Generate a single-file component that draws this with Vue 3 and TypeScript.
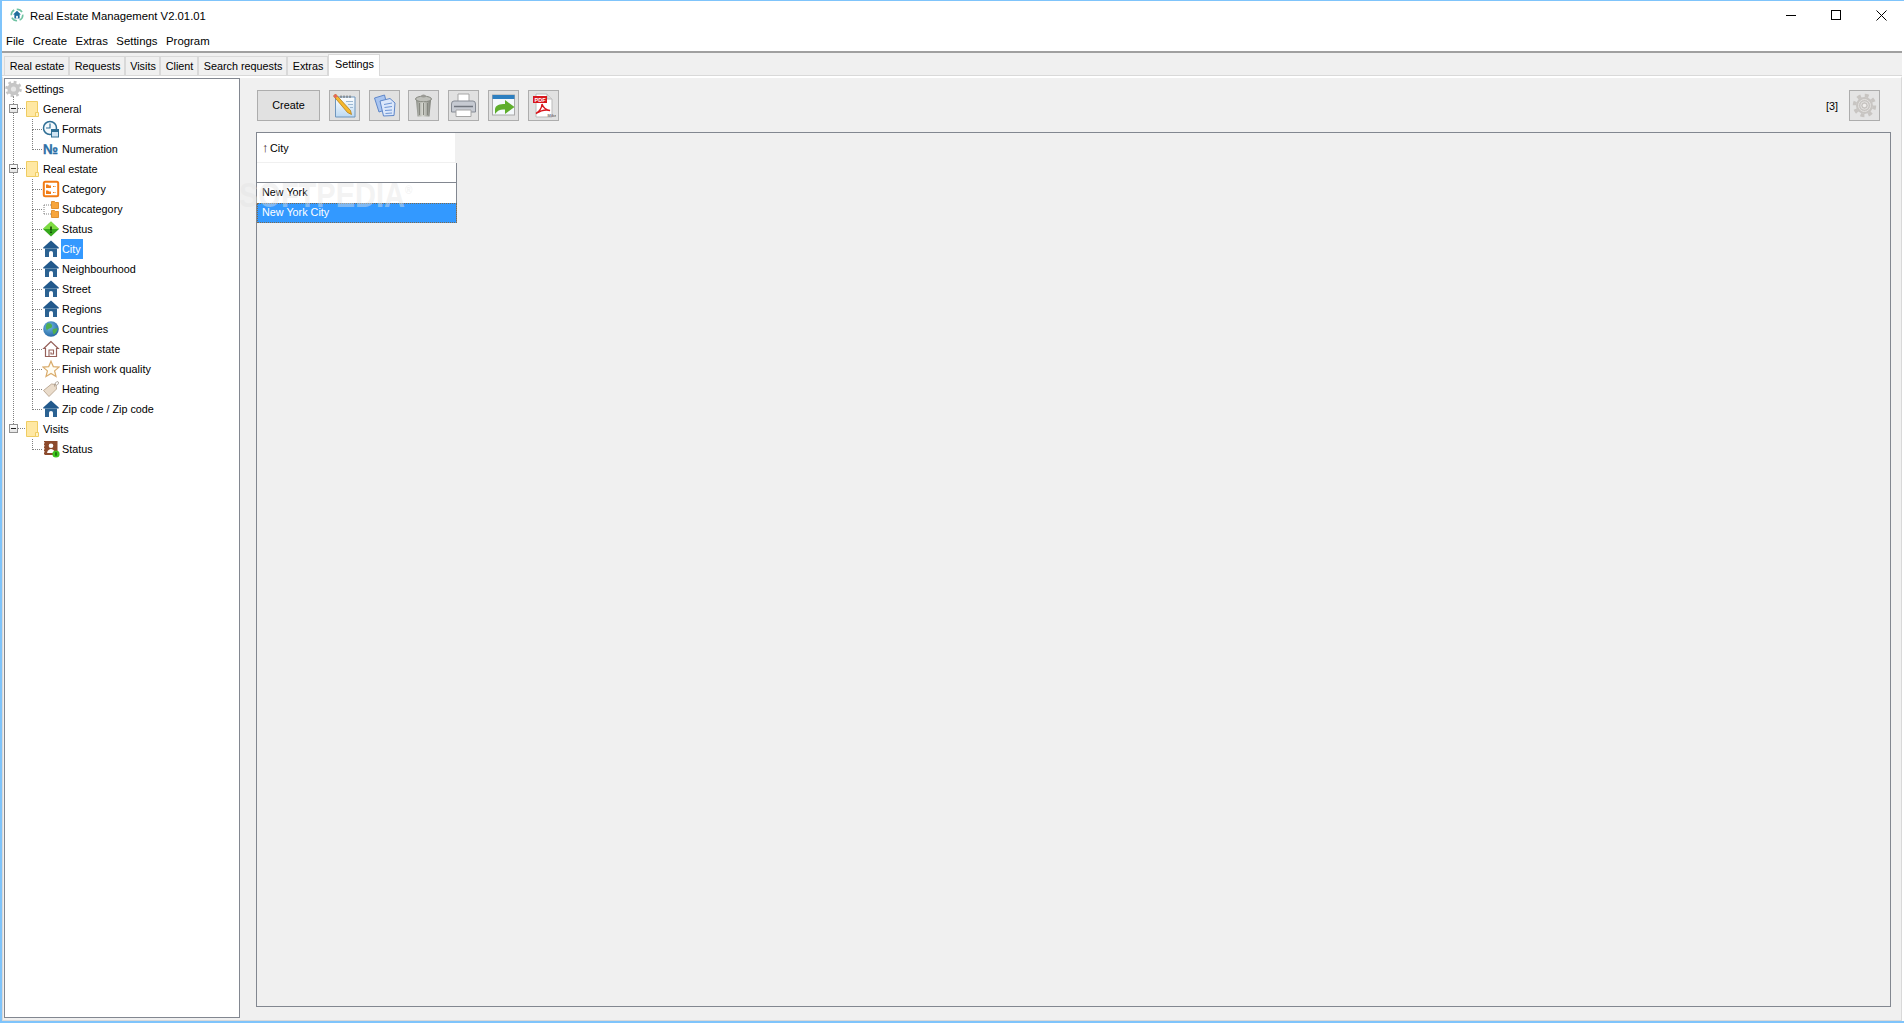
<script setup lang="ts">
type Row = { label: string; level: number; icon: string; selected?: boolean; last?: boolean };
const tabs = [
  { label: 'Real estate', width: 65 },
  { label: 'Requests', width: 56 },
  { label: 'Visits', width: 35 },
  { label: 'Client', width: 38 },
  { label: 'Search requests', width: 89 },
  { label: 'Extras', width: 41 },
];
const menus = ['File', 'Create', 'Extras', 'Settings', 'Program'];
const rows: Row[] = [
  { label: 'Settings', level: 0, icon: 'gear' },
  { label: 'General', level: 1, icon: 'folder' },
  { label: 'Formats', level: 2, icon: 'clock' },
  { label: 'Numeration', level: 2, icon: 'num', last: true },
  { label: 'Real estate', level: 1, icon: 'folder' },
  { label: 'Category', level: 2, icon: 'cat' },
  { label: 'Subcategory', level: 2, icon: 'subcat' },
  { label: 'Status', level: 2, icon: 'diamond' },
  { label: 'City', level: 2, icon: 'house', selected: true },
  { label: 'Neighbourhood', level: 2, icon: 'house' },
  { label: 'Street', level: 2, icon: 'house' },
  { label: 'Regions', level: 2, icon: 'house' },
  { label: 'Countries', level: 2, icon: 'globe' },
  { label: 'Repair state', level: 2, icon: 'repair' },
  { label: 'Finish work quality', level: 2, icon: 'star' },
  { label: 'Heating', level: 2, icon: 'tag' },
  { label: 'Zip code / Zip code', level: 2, icon: 'house', last: true },
  { label: 'Visits', level: 1, icon: 'folder' },
  { label: 'Status', level: 2, icon: 'person', last: true },
];
</script>

<template>
  <div class="window">
    <header class="titlebar">
      <svg class="app-icon" width="14" height="14" viewBox="0 0 16 16">
        <circle cx="8" cy="8" r="6.6" fill="none" stroke="#6fc3a2" stroke-width="1.8" stroke-dasharray="7 3" />
        <path d="M8 3 12.500 7.500H11V12H5V7.500H3.500Z" fill="#1f6d9c" />
        <rect x="7" y="9" width="2" height="3" fill="#fff" />
      </svg>
      <span class="title">Real Estate Management V2.01.01</span>
      <div class="win-controls">
        <svg width="11" height="11" viewBox="0 0 11 11"><path d="M0 5.500H10" stroke="#000" /></svg>
        <svg width="11" height="11" viewBox="0 0 11 11"><rect x=".5" y=".5" width="9" height="9" fill="none" stroke="#000" /></svg>
        <svg width="11" height="11" viewBox="0 0 11 11"><path d="M.5 .5 10.500 10.500M10.500 .5 .5 10.500" stroke="#000" /></svg>
      </div>
    </header>
    <nav class="menubar">
      <span v-for="m in menus" :key="m">{{ m }}</span>
    </nav>
    <div class="tabbar">
      <div v-for="t in tabs" :key="t.label" class="tab" :style="{ width: t.width + 'px' }">{{ t.label }}</div>
      <div class="tab active">Settings</div>
    </div>
    <main class="pane">
      <aside class="tree">
        <span class="trunk"></span>
        <div v-for="(r, i) in rows" :key="i" class="row" :class="'lvl' + r.level">
          <span v-if="r.level === 1" class="expander"></span>
          <span v-if="r.level === 2" class="branch" :class="{ end: r.last }"></span>
          <span class="node-icon">
            <svg width="18" height="18" viewBox="0 0 18 18">
              <template v-if="r.icon === 'gear'">
                <circle cx="8.500" cy="9" r="6.200" fill="#c6c6c6" />
                <circle cx="8.500" cy="9" r="6.800" fill="none" stroke="#c6c6c6" stroke-width="3" stroke-dasharray="2.700 2.640" />
                <circle cx="8.500" cy="9" r="2.600" fill="#e6e6e6" />
              </template>
              <template v-else-if="r.icon === 'folder'">
                <path d="M2.500 1.500H13.500V16.500H2.500Z" fill="#ffe8a3" stroke="#f0cd63" />
                <path d="M11.500 12.500H14.500V16.500H11.500Z" fill="#fff3c4" stroke="#f0cd63" />
              </template>
              <template v-else-if="r.icon === 'clock'">
                <circle cx="8" cy="8" r="6.500" fill="#f4f9fc" stroke="#2f6f95" stroke-width="1.500" />
                <path d="M8 3.500V8H4" fill="none" stroke="#2f6f95" stroke-width="1.200" />
                <rect x="9.500" y="9.500" width="7" height="7.500" fill="#cfe3f2" stroke="#2f6f95" />
                <rect x="9.500" y="9.500" width="7" height="2.500" fill="#2f6f95" />
              </template>
              <template v-else-if="r.icon === 'num'">
                <text x="1" y="14" class="num-glyph" textLength="15" lengthAdjust="spacingAndGlyphs">№</text>
              </template>
              <template v-else-if="r.icon === 'cat'">
                <rect x="1.800" y="1.800" width="14.400" height="14.400" rx="1.500" fill="#fff" stroke="#f17c16" stroke-width="2" />
                <path d="M4 4.500H6L7 5.500H9V8H4ZM4 10.500H6L7 11.500H9V14H4Z" fill="#f17c16" />
                <path d="M11 6.500H14M11 12.500H14" stroke="#f17c16" stroke-dasharray="1.500 1" />
              </template>
              <template v-else-if="r.icon === 'subcat'">
                <path d="M2 5V14M2 5H9M2 14H9" fill="none" stroke="#808080" stroke-dasharray="1 1" />
                <path d="M9.500 1.500H12.500L13.500 2.500H16.500V8.500H9.500Z" fill="#f7a63d" stroke="#d88216" stroke-width=".8" />
                <path d="M9.500 10.500H12.500L13.500 11.500H16.500V17.500H9.500Z" fill="#f7a63d" stroke="#d88216" stroke-width=".8" />
              </template>
              <template v-else-if="r.icon === 'diamond'">
                <path d="M9 1.500 17 9 9 16.500 1 9Z" fill="#36a81c" />
                <path d="M9 1.500 17 9H1Z" fill="#7fdc42" />
                <path d="M9 6.500V10.500M9 11.500V13" stroke="#123d08" stroke-width="1.600" />
              </template>
              <template v-else-if="r.icon === 'house'">
                <path d="M9 .5 16.800 7.500V8.500H1.200V7.500Z" fill="#22598c" />
                <path d="M3 8.500H15V17H3Z" fill="#2b6292" />
                <path d="M7 17V12.500Q7 11 9 11T11 12.500V17Z" fill="#fff" />
              </template>
              <template v-else-if="r.icon === 'globe'">
                <defs>
                  <radialGradient id="globe-sea" cx=".4" cy=".35" r=".75">
                    <stop offset="0" stop-color="#6fb7e6" />
                    <stop offset="1" stop-color="#1f5f9c" />
                  </radialGradient>
                </defs>
                <circle cx="9" cy="9" r="7.800" fill="url(#globe-sea)" />
                <path d="M5 3.500C8 2.500 11 4.500 10 7 9 9 6 8 5 10.500 3.500 8 3.500 6 5 3.500ZM11 9 15.500 8C15.500 11 13.500 14 11.500 14.500 11 12 10 11 11 9Z" fill="#4fae4f" />
              </template>
              <template v-else-if="r.icon === 'repair'">
                <path d="M9 1.500 1.800 8.500H3.500V16.500H14.500V8.500H16.200Z" fill="#fff" stroke="#96615a" stroke-width="1.200" />
                <path d="M7 16.500V10H11.500V14H9V12.300" fill="none" stroke="#96615a" stroke-width="1.100" />
              </template>
              <template v-else-if="r.icon === 'star'">
                <path d="M9 1.200 11.300 6.600 17 7.100 12.600 10.900 14 16.500 9 13.500 4 16.500 5.400 10.900 1 7.100 6.700 6.600Z" fill="#fffdf4" stroke="#d9ab6b" stroke-width="1.200" />
              </template>
              <template v-else-if="r.icon === 'tag'">
                <path d="M1.500 10.500 9.500 4 14 4.500 14.500 9 7 16.500Z" fill="#eadccb" stroke="#b8a48e" stroke-width=".9" />
                <path d="M12.500 6.500C12.500 3 15 .5 16.300 2 17 3.500 15.500 5 14.300 5.500" fill="none" stroke="#9b8f84" stroke-width=".8" />
              </template>
              <template v-else>
                <rect x="2" y="1" width="13.500" height="14" fill="#8c4a2c" />
                <path d="M2 2V15" stroke="#fff" stroke-dasharray="1.500 1.500" />
                <circle cx="9" cy="5.800" r="2.300" fill="#fff" />
                <path d="M5 13C5.500 10 7.500 9 9 9S12.500 10 13 13Z" fill="#fff" />
                <circle cx="14" cy="14" r="3.600" fill="#3dc41e" />
                <path d="M14 12.300V15.700" stroke="#0c4d06" stroke-width="1.200" />
              </template>
            </svg>
          </span>
          <span class="label" :class="{ selected: r.selected }">{{ r.label }}</span>
        </div>
      </aside>
      <section class="content">
        <div class="toolbar">
          <button class="btn create">Create</button>
          <div class="tools">
            <button class="btn icon">
              <svg width="25" height="25" viewBox="0 0 25 25">
                <defs>
                  <linearGradient id="pad" x1="0" x2="0" y1="0" y2="1">
                    <stop offset="0" stop-color="#fff" />
                    <stop offset="1" stop-color="#bcd9f2" />
                  </linearGradient>
                </defs>
                <path d="M3.500 4H23V24H3.500Z" fill="url(#pad)" stroke="#6f96bd" />
                <path d="M9 2.500V5M12 2.500V5M15 2.500V5M18 2.500V5" stroke="#666" />
                <path d="M14 8.500H21M16 11.500H21M18 14.500H21" stroke="#9cb8d2" />
                <path d="M1.500 3 3.500 1 18.500 17.500 19.500 21.500 15.500 19.500Z" fill="#f7b92e" stroke="#a8730e" stroke-width=".7" />
                <path d="M1.500 3 3.500 1 5.500 3.200 3.500 5.200Z" fill="#e8615f" />
              </svg>
            </button>
            <button class="btn icon">
              <svg width="25" height="25" viewBox="0 0 25 25">
                <path d="M2.500 5 12.500 2 16 16 7 19Z" fill="#a8c4f0" stroke="#5f87c9" />
                <path d="M8 8 18 5.500 23 10 22 22.500 11.500 23Z" fill="#dbe7fb" stroke="#5f87c9" />
                <path d="M12 11.500 20 10M12.500 14.500 20 13.500M13 17.500 20 17M13.500 20.500 20 20" stroke="#6f96d4" />
              </svg>
            </button>
            <button class="btn icon">
              <svg width="25" height="25" viewBox="0 0 25 25">
                <defs>
                  <linearGradient id="bin" x1="0" x2="1" y1="0" y2="0">
                    <stop offset="0" stop-color="#8b8e87" />
                    <stop offset=".45" stop-color="#d8d9d2" />
                    <stop offset="1" stop-color="#7b7d76" />
                  </linearGradient>
                </defs>
                <path d="M5 7H20L18.500 23.500H6.500Z" fill="url(#bin)" />
                <path d="M8.500 10V22M12.500 10V22M16.500 10V22" stroke="#85877f" />
                <ellipse cx="12.500" cy="6" rx="8" ry="2.800" fill="#bfc0ba" stroke="#85877f" />
                <ellipse cx="12.500" cy="3" rx="2.500" ry="1.500" fill="#9a9a95" />
              </svg>
            </button>
            <button class="btn icon">
              <svg width="27" height="25" viewBox="0 0 27 25">
                <path d="M8 1H19V10H8Z" fill="#fff" stroke="#a5a5a5" />
                <path d="M1.500 11Q1.500 8 4 8H23Q25.500 8 25.500 11V19H1.500Z" fill="#c6cad2" stroke="#868b94" />
                <path d="M4 13.500H23" stroke="#70757e" stroke-width="1.500" />
                <path d="M6 17H21V23.500H6Z" fill="#fff" stroke="#a5a5a5" />
              </svg>
            </button>
            <button class="btn icon">
              <svg width="25" height="25" viewBox="0 0 25 25">
                <rect x="1.500" y="2" width="22" height="20" fill="#f4f8fb" stroke="#aaa" />
                <rect x="1.500" y="2" width="22" height="4" fill="#2d7fc0" />
                <path d="M4 21V16C4.500 12 9 11 14 11V7L23.500 14 14 21V16.500C10 16 6.500 17 4 21Z" fill="#5fae2c" />
              </svg>
            </button>
            <button class="btn icon">
              <svg width="25" height="25" viewBox="0 0 25 25">
                <path d="M5 1H16L21 6V24H5Z" fill="#fff" stroke="#bbb" />
                <path d="M16 1V6H21" fill="#ddd" stroke="#bbb" />
                <rect x="2" y="3" width="14" height="7" fill="#d8161c" />
                <text x="9" y="9" class="pdf-tag" text-anchor="middle">PDF</text>
                <path d="M11 11C11 15 8 19 5 20.500 9 18 14 16 19 17.500 15.500 17.500 12 14.500 11 11Z" fill="none" stroke="#d8161c" stroke-width="1.400" />
                <text x="21" y="23.500" class="pdf-small" text-anchor="middle">Mike</text>
              </svg>
            </button>
          </div>
          <span class="count">[3]</span>
          <button class="btn icon gear-btn">
            <svg width="25" height="25" viewBox="0 0 25 25">
              <circle cx="12.500" cy="12.500" r="8.500" fill="#c8c5c2" />
              <circle cx="12.500" cy="12.500" r="10" fill="none" stroke="#c8c5c2" stroke-width="3.500" stroke-dasharray="3.900 3.950" />
              <circle cx="12.500" cy="12.500" r="6" fill="none" stroke="#e4e2e0" />
              <circle cx="12.500" cy="12.500" r="3.800" fill="none" stroke="#e4e2e0" />
              <circle cx="12.500" cy="12.500" r="1.800" fill="#f0eeec" />
            </svg>
          </button>
        </div>
        <div class="table-panel">
          <div class="grid">
            <div class="grid-head"><span class="arrow">↑</span><span>City</span></div>
            <div class="grid-filter"></div>
            <div class="grid-row">New York</div>
            <div class="grid-row current">New York City</div>
          </div>
        </div>
      </section>
      <span class="watermark">SOFTPEDIA<sup>®</sup></span>
    </main>
  </div>
</template>

<style>
html, body { margin: 0; padding: 0; overflow: hidden; background: #fff; }
</style>

<style scoped>
* { box-sizing: border-box; }
.window {
  width: 1904px; height: 1023px; display: flex; flex-direction: column;
  border: 0 solid #7fc4fb; border-width: 1px 0 2px 2px; padding-right: 2px;
  font: 10.800px "Liberation Sans", Arial, sans-serif; color: #000; background: #fff;
}
.titlebar { height: 28px; display: flex; align-items: center; padding-left: 8px; flex: none; }
.app-icon { margin-right: 6px; }
.title { font-size: 11.300px; padding-top: 2px; }
.win-controls { margin-left: auto; display: flex; gap: 34px; padding-right: 15px; }
.win-controls svg { display: block; }
.menubar { height: 24px; display: flex; align-items: center; gap: 8.500px; padding: 2px 0 0 4px; border-bottom: 2px solid #a0a0a0; flex: none; font-size: 11.400px; }
.tabbar { height: 23px; display: flex; align-items: flex-end; padding-left: 2px; background: #f0f0f0; flex: none; border-bottom: 1px solid #d9d9d9; }
.tab { height: 19px; display: flex; align-items: center; justify-content: center; background: #f0f0f0; border: 1px solid #d9d9d9; border-bottom: 0; padding-left: 1px; }
.tab.active { height: 22px; width: 52px; background: #fff; margin-bottom: -1px; padding: 0 0 3px 1px; position: relative; z-index: 1; }
.pane { flex: 1; display: flex; min-height: 0; gap: 16px; padding: 0 10px 2px 1px; background: #f0f0f0; border: 1px solid #d9d9d9; border-top: 2px solid #fff; position: relative; }
.tree { width: 236px; border: 1px solid #828790; background: #fff; position: relative; flex: none; }
.row { height: 20px; display: flex; align-items: center; position: relative; }
.lvl0 { padding-left: 0; }
.lvl1 { padding-left: 19px; }
.lvl2 { padding-left: 37px; }
.lvl1 .label { margin-left: 0; }
.node-icon { width: 18px; height: 18px; flex: none; position: relative; z-index: 1; }
.node-icon svg { display: block; }
.num-glyph { font: 700 14px "Liberation Sans", "DejaVu Sans", sans-serif; fill: #2a6ea6; stroke: #2a6ea6; stroke-width: .4px; }
.label { margin-left: 1px; padding: 0 2px 0 1px; height: 20px; line-height: 20px; }
.selected { background: #3399ff; color: #fff; }
.expander { position: absolute; left: 4px; top: 5px; width: 9px; height: 9px; border: 1px solid #919191; background: linear-gradient(#fff, #e4e4e4); z-index: 1; }
.expander::before { content: ""; position: absolute; left: 1px; right: 1px; top: 3px; height: 1px; background: #222; }
.expander::after { content: ""; position: absolute; left: 8px; top: 3px; width: 7px; border-top: 1px dotted #808080; }
.branch { position: absolute; left: 27px; top: 0; height: 11px; width: 10px; border-left: 1px dotted #808080; border-bottom: 1px dotted #808080; }
.branch:not(.end)::after { content: ""; position: absolute; left: -1px; top: 10px; height: 10px; border-left: 1px dotted #808080; }
.trunk { position: absolute; left: 8px; top: 17px; height: 330px; width: 0; border-left: 1px dotted #808080; }
.content { flex: 1; display: flex; flex-direction: column; min-width: 0; padding-bottom: 11px; }
.toolbar { height: 54px; display: flex; align-items: flex-start; padding: 12px 11px 0 1px; flex: none; }
.btn { height: 31px; background: #e1e1e1; border: 1px solid #adadad; font: inherit; padding: 0; display: flex; align-items: center; justify-content: center; flex: none; }
.create { width: 63px; padding-bottom: 1px; }
.tools { display: flex; margin-left: 9px; gap: 9px; }
.tools .btn:nth-child(3) { margin-left: -1px; }
.btn.icon { width: 31px; }
.pdf-tag { font: 700 5.500px "Liberation Sans", sans-serif; fill: #fff; }
.pdf-small { font: 700 4px "Liberation Sans", sans-serif; fill: #777; }
.count { margin-left: auto; margin-right: 11px; height: 31px; line-height: 32px; }
.gear-btn { background: #e4e4e4; }
.table-panel { flex: 1; border: 1px solid #828790; background: #f0f0f0; }
.grid { width: 200px; }
.grid-head { height: 30px; background: #fff; width: 198px; display: flex; align-items: center; gap: 1px; padding-left: 5px; border-bottom: 1px solid #f0f0f0; }
.arrow { color: #3a2222; font-size: 13px; width: 7px; line-height: 1; }
.grid-filter { height: 20px; background: #fff; border-right: 1px solid #828790; border-bottom: 1px solid #828790; }
.grid-row { height: 20px; display: flex; align-items: center; background: #fff; padding: 0 0 2px 5px; border-right: 1px solid #828790; }
.grid-row.current { background: #3399ff; color: #fff; outline: 1px dotted #7a6a50; outline-offset: -1px; }
.watermark { position: absolute; left: 236px; top: 98px; font: 700 29px "Liberation Sans", sans-serif; color: rgba(228,228,228,.45); transform: scaleY(1.2); transform-origin: top left; pointer-events: none; }
.watermark sup { font-size: 10px; }
</style>
